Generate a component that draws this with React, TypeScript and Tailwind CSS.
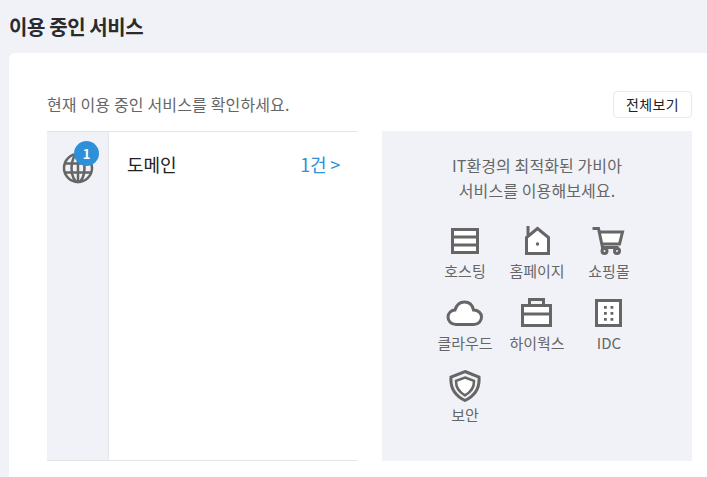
const font = { fontFamily: '"Noto Sans CJK KR", "Noto Sans", sans-serif' };

function Icon({ children, w = 34 }: { children: React.ReactNode; w?: number }) {
  return (
    <svg width={w} height="34" viewBox={`0 0 ${w} 34`} fill="none" stroke="#666666" strokeWidth="3">
      {children}
    </svg>
  );
}

const services = [
  {
    label: "호스팅",
    icon: (
      <Icon>
        <path d="M4.5 5.5h25v23h-25zM4.5 13h25M4.5 21h25" fill="#fff" />
      </Icon>
    ),
  },
  {
    label: "홈페이지",
    icon: (
      <Icon>
        <path d="M6.500 29.500V13.500L17.500 4.500l11 9v16z" fill="#fff" />
        <path d="M8 2v9" />
        <circle cx="17.500" cy="20" r="1.700" fill="#666666" stroke="none" />
      </Icon>
    ),
  },
  {
    label: "쇼핑몰",
    icon: (
      <Icon>
        <path d="M7.500 8h23l-3 12H10z" fill="#fff" stroke="none" />
        <path d="M0.500 4.500h6l4 19h16" />
        <path d="M7.500 8h23l-3 12H10" />
        <circle cx="12.500" cy="27" r="2.500" />
        <circle cx="25" cy="27" r="2.500" />
      </Icon>
    ),
  },
  {
    label: "클라우드",
    icon: (
      <Icon w={38}>
        <path
          d="M10 28.500c-5 0-8-3.500-8-7.500 0-4 3.500-7 7-7C10.500 9 14 6 18.500 6c4.500 0 8 3 9 8 4.500 0 8 3 8 7s-3 7.500-7.500 7.500z"
          fill="#fff"
        />
      </Icon>
    ),
  },
  {
    label: "하이웍스",
    icon: (
      <Icon>
        <path d="M9.500 9.500v-6h14v6" />
        <path d="M2.500 9.500h28v20h-28zM2.500 18h28" fill="#fff" />
      </Icon>
    ),
  },
  {
    label: "IDC",
    icon: (
      <Icon>
        <path d="M4.500 4.500h24v25h-24z" fill="#fff" />
        <path
          d="M12 10h2.800v2.800H12zM18.500 10h2.800v2.800h-2.800zM12 16h2.800v2.800H12zM18.500 16h2.800v2.800h-2.800zM12 22h2.800v2.800H12zM18.500 22h2.800v2.800h-2.800z"
          fill="#666666"
          stroke="none"
        />
      </Icon>
    ),
  },
  {
    label: "보안",
    icon: (
      <Icon>
        <path d="M17 3.500L31 9c.8 10-3.500 18.500-14 23.500C6.500 27.500 2.200 19 3 9z" />
        <path d="M17 9.500l9 3.300c.2 6-2.500 11-9 14.500-6.500-3.500-9.200-8.500-9-14.500z" strokeWidth="2.500" fill="#fff" />
      </Icon>
    ),
  },
];

export default function App() {
  return (
    <div className="h-screen overflow-hidden bg-[#f1f2f8] flex flex-col text-[#222222]" style={font}>
      <h1 className="ml-[9px] h-[53px] pt-[13px] text-[20px] leading-[28px] font-bold tracking-[-0.4px] text-[#2b2b2b]">
        이용 중인 서비스
      </h1>

      <div className="flex-1 ml-[9px] bg-white rounded-tl-[6px] pl-[38px] pr-[15px] pt-[38px]">
        <div className="flex items-start justify-between h-[40px]">
          <p className="text-[16px] leading-[26px] tracking-[0.15px] text-[#666666]">
            현재 이용 중인 서비스를 확인하세요.
          </p>
          <button className="w-[79px] h-[27px] border border-[#e8e8ee] rounded-[4px] bg-white text-[14px] tracking-[0.4px] text-[#222222]">
            전체보기
          </button>
        </div>

        <div className="flex justify-between h-[330px]">
          <div className="w-[310px] flex border-y border-[#e6e6ea]">
            <div className="relative w-[62px] bg-[#f1f2f8] border-r border-[#e6e6ea] flex justify-center">
              <svg
                className="mt-[20px]"
                width="32"
                height="32"
                viewBox="0 0 32 32"
                fill="none"
                stroke="#666666"
                strokeWidth="2.500"
              >
                <circle cx="16" cy="16" r="14" />
                <ellipse cx="16" cy="16" rx="6.500" ry="14" />
                <path d="M2 11.500h28M2 20.500h28M16 2v28" />
              </svg>
              <span className="absolute left-[27px] top-[9px] w-[25px] h-[25px] rounded-full bg-[#2e90d9] text-white text-[13px] leading-[25px] font-bold text-center">
                1
              </span>
            </div>
            <div className="flex-1 flex items-start justify-between pl-[18px] pr-[17px] pt-[19px]">
              <span className="text-[18px] leading-[26px] text-[#222222]">도메인</span>
              <span className="text-[18px] leading-[26px] tracking-[-0.2px] text-[#2e90d9]">1건 &gt;</span>
            </div>
          </div>

          <div className="w-[310px] bg-[#f1f2f8] pt-[22px]">
            <p className="text-[16px] leading-[25px] tracking-[0.1px] text-[#666666] text-center">
              IT환경의 최적화된 가비아
              <br />
              서비스를 이용해보세요.
            </p>
            <div className="grid grid-cols-[72px_72px_72px] auto-rows-[72px] ml-[47px] mt-[19px]">
              {services.map((item) => (
                <div key={item.label} className="flex flex-col items-center">
                  <div className="h-[38px] flex items-center">{item.icon}</div>
                  <span className="text-[15px] leading-[22px] text-[#666666] whitespace-nowrap">{item.label}</span>
                </div>
              ))}
            </div>
          </div>
        </div>
      </div>
    </div>
  );
}
